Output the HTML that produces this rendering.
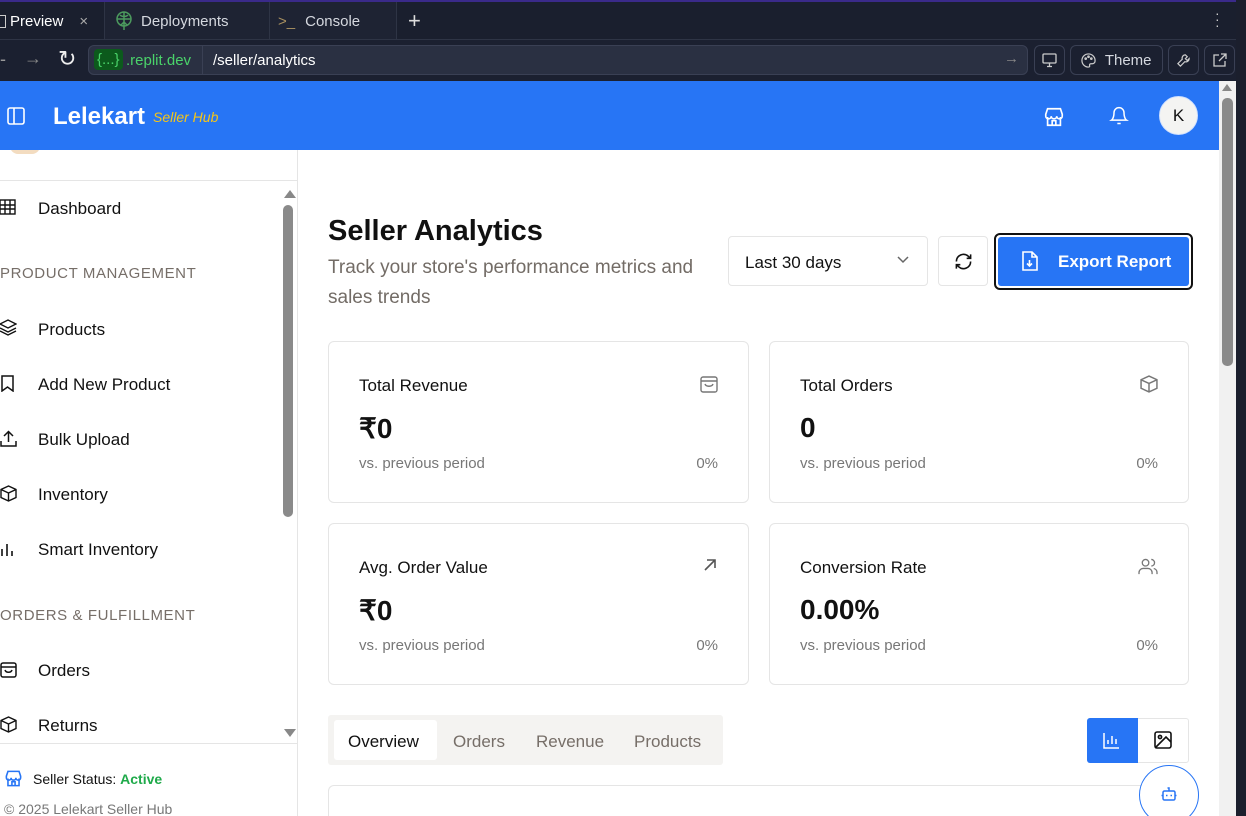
<!DOCTYPE html>
<html><head><meta charset="utf-8"><style>
*{box-sizing:border-box;margin:0;padding:0}
html,body{width:1246px;height:816px;overflow:hidden}
body{background:#1b1f2d;font-family:"Liberation Sans",sans-serif;position:relative}
.abs{position:absolute}
.tabbar{left:0;top:0;width:1246px;height:39px;background:#1a1f2e;border-top:2px solid #3a2a8a;color:#d5d8df;font-size:15px}
.tab{top:0;height:38px;display:flex;align-items:center;border-right:1px solid #2e3445}
.urlrow{left:0;top:39px;width:1246px;height:42px;background:#1b2030;border-top:1px solid #2e3445}
.url{left:88px;top:5px;width:940px;height:30px;background:#2a3042;border:1px solid #3a4054;border-radius:6px;color:#fff;font-size:15px}
.btn{top:5px;height:30px;border:1px solid #3a4054;border-radius:6px;color:#d5d8df;font-size:15px;display:flex;align-items:center;justify-content:center}
.header{left:0;top:81px;width:1219px;height:69px;background:#2775f5}
.page{left:0;top:150px;width:1219px;height:666px;background:#fff}
.vscroll{left:1219px;top:81px;width:17px;height:735px;background:#f1f1f1}
.rb{left:1236px;top:0;width:10px;height:816px;background:#1b1f2d}
.side{left:0;top:150px;width:298px;height:666px;border-right:1px solid #e5e5e5;background:#fff;overflow:hidden}
.nav{left:38px;font-size:17px;color:#111}
.sec{left:0;font-size:15px;color:#766e68;letter-spacing:0.6px}
.card{border:1px solid #e5e5e5;border-radius:6px;background:#fff;width:421px;height:162px}
.card .t{position:absolute;left:30px;top:34px;font-size:17px;color:#111}
.card .v{position:absolute;left:30px;top:70px;font-size:28px;font-weight:bold;color:#111}
.card .s{position:absolute;left:30px;top:113px;font-size:15px;color:#777}
.card .p{position:absolute;right:30px;top:113px;font-size:15px;color:#777}
.card svg{position:absolute;right:30px;top:33px}
</style></head><body>
<div class="abs tabbar">
 <div class="abs tab" style="left:0;width:105px;background:#1a1f2e"><span style="margin-left:-2px;border:1.5px solid #ccc;width:8px;height:13px;display:inline-block;border-left:none"></span><span style="margin-left:4px;color:#fff">Preview</span><span style="margin-left:16px;color:#aaa">×</span></div>
 <div class="abs tab" style="left:105px;width:165px;background:#1e2333"><svg style="margin-left:10px" width="18" height="20" viewBox="0 0 18 20" fill="none" stroke="#4c9a5e" stroke-width="1.5"><circle cx="9" cy="8" r="7"/><path d="M2 8h14M9 1v18M5 4c2 2 6 2 8 0M6 14l3-3 3 3"/></svg><span style="margin-left:8px">Deployments</span></div>
 <div class="abs tab" style="left:270px;width:127px;background:#1e2333"><span style="margin-left:8px;color:#a89060">&gt;_</span><span style="margin-left:10px">Console</span></div>
 <div class="abs" style="left:408px;top:6px;font-size:22px;color:#ddd">+</div>
 <div class="abs" style="left:1215px;top:8px;color:#ccc;font-size:14px;line-height:6px">·<br>·<br>·</div>
</div>
<div class="abs urlrow">
 <div class="abs" style="left:0;top:9px;color:#999;font-size:18px">-</div>
 <div class="abs" style="left:24px;top:8px;color:#888;font-size:18px">→</div>
 <div class="abs" style="left:58px;top:6px;color:#eee;font-size:22px">↻</div>
 <div class="abs url"><span class="abs" style="left:5px;top:3px;background:#0c5a1c;color:#4ad36a;border-radius:4px;padding:2px 3px;font-size:15px">{...}</span><span class="abs" style="left:37px;top:6px;color:#4ad36a">.replit.dev</span><span class="abs" style="left:113px;top:0;width:1px;height:28px;background:#3a4054"></span><span class="abs" style="left:124px;top:6px">/seller/analytics</span><span class="abs" style="right:8px;top:4px;color:#888">→</span></div>
 <div class="abs btn" style="left:1034px;width:31px"><svg width="15" height="15" viewBox="0 0 15 15" fill="none" stroke="#ccc" stroke-width="1.3"><rect x="1" y="1" width="13" height="9" rx="1"/><path d="M7.5 10v3M5 13.5h5"/></svg></div>
 <div class="abs btn" style="left:1070px;width:93px"><svg width="15" height="15" viewBox="0 0 16 16" fill="none" stroke="#ccc" stroke-width="1.3"><path d="M8 1a7 7 0 0 0 0 14c1 0 1.5-.7 1.2-1.5-.4-1 .2-2 1.3-2H12a3 3 0 0 0 3-3A7 7 0 0 0 8 1z"/><circle cx="5" cy="6" r=".8"/><circle cx="8" cy="4" r=".8"/><circle cx="11" cy="6" r=".8"/></svg>&nbsp;&nbsp;Theme</div>
 <div class="abs btn" style="left:1168px;width:31px"><svg width="15" height="15" viewBox="0 0 16 16" fill="none" stroke="#ccc" stroke-width="1.3"><path d="M10 2a3.5 3.5 0 0 0-3.3 4.6L2 11.3 4.7 14l4.7-4.7A3.5 3.5 0 0 0 14 6l-2 2-2-2 2-2z"/></svg></div>
 <div class="abs btn" style="left:1204px;width:31px"><svg width="14" height="14" viewBox="0 0 14 14" fill="none" stroke="#ccc" stroke-width="1.3"><path d="M12 8v5H1V2h5M8 1h5v5M13 1L6 8"/></svg></div>
</div>
<div class="abs header">
 <svg class="abs" style="left:7px;top:26px" width="18" height="18" viewBox="0 0 18 18" fill="none" stroke="#fff" stroke-width="1.6"><rect x="1" y="1" width="16" height="16" rx="2"/><path d="M7 1v16"/></svg>
 <div class="abs" style="left:53px;top:22px;color:#fff;font-size:24px;font-weight:bold">Lelekart</div>
 <div class="abs" style="left:153px;top:28px;color:#f5c518;font-size:14px;font-style:italic">Seller Hub</div>
 <svg class="abs" style="left:1043px;top:25px" width="22" height="22" viewBox="0 0 24 24" fill="none" stroke="#fff" stroke-width="1.8"><path d="M3 9l2-6h14l2 6v2a3 3 0 0 1-6 0 3 3 0 0 1-6 0 3 3 0 0 1-6 0z"/><path d="M5 12v9h14v-9M10 21v-5h4v5"/></svg>
 <svg class="abs" style="left:1109px;top:24px" width="20" height="22" viewBox="0 0 24 24" fill="none" stroke="#fff" stroke-width="1.8"><path d="M6 8a6 6 0 0 1 12 0c0 7 3 9 3 9H3s3-2 3-9M10 21h4"/></svg>
 <div class="abs" style="left:1159px;top:15px;width:39px;height:39px;border-radius:50%;background:#f4f4f2;border:1px solid #cfe0ff;text-align:center;line-height:38px;font-size:17px;color:#111">K</div>
</div>
<div class="abs page"></div>
<div class="abs side">
 <div class="abs" style="left:0;top:0;width:297px;height:31px;border-bottom:1px solid #e5e5e5"><div class="abs" style="left:10px;top:-4px;width:30px;height:8px;border-radius:0 0 15px 15px;background:#f3dcc0"></div></div>
 <div class="abs" style="left:284px;top:40px;width:0;height:0;border-left:6px solid transparent;border-right:6px solid transparent;border-bottom:8px solid #888"></div>
 <div class="abs" style="left:283px;top:55px;width:10px;height:312px;background:#8a8a8a;border-radius:5px"></div>
 <div class="abs" style="left:284px;top:579px;width:0;height:0;border-left:6px solid transparent;border-right:6px solid transparent;border-top:8px solid #888"></div>
 <svg class="abs" style="left:0;top:49px" width="16" height="16" viewBox="0 0 16 16" fill="none" stroke="#111" stroke-width="1.4"><rect x="0" y="1" width="15" height="14"/><path d="M0 6h15M0 10h15M5 1v14M10 1v14"/></svg>
 <div class="abs nav" style="top:49px">Dashboard</div>
 <div class="abs sec" style="top:115px">PRODUCT MANAGEMENT</div>
 <svg class="abs" style="left:0;top:169px" width="17" height="17" viewBox="0 0 17 17" fill="none" stroke="#111" stroke-width="1.4"><path d="M0 5l8-4 8 4-8 4zM0 9l8 4 8-4M0 12l8 4 8-4"/></svg>
 <div class="abs nav" style="top:170px">Products</div>
 <svg class="abs" style="left:0;top:225px" width="15" height="17" viewBox="0 0 15 17" fill="none" stroke="#111" stroke-width="1.5"><path d="M2 1h11v15l-5.5-4L2 16z"/></svg>
 <div class="abs nav" style="top:225px">Add New Product</div>
 <svg class="abs" style="left:0;top:280px" width="17" height="17" viewBox="0 0 17 17" fill="none" stroke="#111" stroke-width="1.5"><path d="M1 11v5h15v-5M8.5 12V2M4 6l4.5-4.5L13 6"/></svg>
 <div class="abs nav" style="top:280px">Bulk Upload</div>
 <svg class="abs" style="left:0;top:335px" width="17" height="17" viewBox="0 0 17 17" fill="none" stroke="#111" stroke-width="1.4"><path d="M8.5 1L16 4.5v8L8.5 16 1 12.5v-8zM1 4.5l7.5 3.5 7.5-3.5M8.5 8v8"/></svg>
 <div class="abs nav" style="top:335px">Inventory</div>
 <svg class="abs" style="left:0;top:391px" width="16" height="16" viewBox="0 0 16 16" fill="none" stroke="#111" stroke-width="1.6"><path d="M2 15V8M7 15V3M12 15V10"/></svg>
 <div class="abs nav" style="top:390px">Smart Inventory</div>
 <div class="abs sec" style="top:457px">ORDERS &amp; FULFILLMENT</div>
 <svg class="abs" style="left:0;top:511px" width="17" height="17" viewBox="0 0 17 17" fill="none" stroke="#111" stroke-width="1.5"><rect x="1" y="2" width="15" height="14" rx="2"/><path d="M1 6h15M5 9c1 3 6 3 7 0"/></svg>
 <div class="abs nav" style="top:511px">Orders</div>
 <svg class="abs" style="left:0;top:566px" width="17" height="17" viewBox="0 0 17 17" fill="none" stroke="#111" stroke-width="1.4"><path d="M8.5 1L16 4.5v8L8.5 16 1 12.5v-8zM1 4.5l7.5 3.5 7.5-3.5M8.5 8v8"/></svg>
 <div class="abs nav" style="top:566px">Returns</div>
 <div class="abs" style="left:0;top:593px;width:297px;height:1px;background:#e5e5e5"></div>
 <svg class="abs" style="left:4px;top:619px" width="19" height="19" viewBox="0 0 24 24" fill="none" stroke="#2775f5" stroke-width="2"><path d="M3 9l2-6h14l2 6v2a3 3 0 0 1-6 0 3 3 0 0 1-6 0 3 3 0 0 1-6 0z"/><path d="M5 12v9h14v-9M10 21v-5h4v5"/></svg>
 <div class="abs" style="left:33px;top:621px;font-size:14px;color:#111">Seller Status: <span style="color:#1faa4a;font-weight:bold">Active</span></div>
 <div class="abs" style="left:4px;top:651px;font-size:14px;color:#777">© 2025 Lelekart Seller Hub</div>
</div>
<div class="abs vscroll"><div class="abs" style="left:3px;top:3px;border-left:5px solid transparent;border-right:5px solid transparent;border-bottom:7px solid #888"></div><div class="abs" style="left:3px;top:17px;width:11px;height:268px;background:#8a8a8a;border-radius:5px"></div></div>
<div class="abs rb"></div>

<div class="abs" style="left:328px;top:215px;font-size:29px;font-weight:bold;color:#111">Seller Analytics</div>
<div class="abs" style="left:328px;top:253px;width:400px;font-size:19px;line-height:30px;color:#736c66">Track your store's performance metrics and sales trends</div>
<div class="abs" style="left:728px;top:236px;width:200px;height:50px;border:1px solid #e5e5e5;border-radius:4px;font-size:17px;color:#111;padding:16px 0 0 16px">Last 30 days<svg class="abs" style="right:18px;top:19px" width="12" height="8" viewBox="0 0 12 8" fill="none" stroke="#666" stroke-width="1.5"><path d="M1 1l5 5 5-5"/></svg></div>
<div class="abs" style="left:938px;top:236px;width:50px;height:50px;border:1px solid #e5e5e5;border-radius:4px"><svg class="abs" style="left:15px;top:15px" width="19" height="19" viewBox="0 0 24 24" fill="none" stroke="#111" stroke-width="2"><path d="M3 12a9 9 0 0 1 15-6.7L21 8M21 3v5h-5M21 12a9 9 0 0 1-15 6.7L3 16M3 21v-5h5"/></svg></div>
<div class="abs" style="left:994px;top:233px;width:199px;height:57px;border:2.5px solid #111;border-radius:6px;padding:2px"><div style="width:100%;height:100%;background:#2775f5;border-radius:3px;position:relative"><svg class="abs" style="left:23px;top:14px" width="17" height="20" viewBox="0 0 17 20" fill="none" stroke="#fff" stroke-width="1.6"><path d="M2 1h9l5 5v13H2zM11 1v5h5M8.5 9v6M6 12.5l2.5 2.5 2.5-2.5"/></svg><span class="abs" style="left:60px;top:15px;color:#fff;font-size:17px;font-weight:bold">Export Report</span></div></div>

<div class="abs card" style="left:328px;top:341px"><div class="t">Total Revenue</div><svg width="18" height="18" viewBox="0 0 18 18" fill="none" stroke="#777" stroke-width="1.4"><rect x="1" y="2" width="16" height="15" rx="2"/><path d="M1 6h16M5 9c1 3 7 3 8 0"/></svg><div class="v">₹0</div><div class="s">vs. previous period</div><div class="p">0%</div></div>
<div class="abs card" style="left:769px;top:341px;width:420px"><div class="t">Total Orders</div><svg width="18" height="18" viewBox="0 0 17 17" fill="none" stroke="#777" stroke-width="1.4"><path d="M8.5 1L16 4.5v8L8.5 16 1 12.5v-8zM1 4.5l7.5 3.5 7.5-3.5M8.5 8v8"/></svg><div class="v">0</div><div class="s">vs. previous period</div><div class="p">0%</div></div>
<div class="abs card" style="left:328px;top:523px"><div class="t">Avg. Order Value</div><svg width="16" height="16" viewBox="0 0 16 16" fill="none" stroke="#555" stroke-width="1.6"><path d="M3 13L13 3M5 3h8v8"/></svg><div class="v">₹0</div><div class="s">vs. previous period</div><div class="p">0%</div></div>
<div class="abs card" style="left:769px;top:523px;width:420px"><div class="t">Conversion Rate</div><svg width="20" height="18" viewBox="0 0 24 22" fill="none" stroke="#777" stroke-width="1.6"><circle cx="9" cy="7" r="4"/><path d="M1 21v-2a5 5 0 0 1 5-5h6a5 5 0 0 1 5 5v2M16 3a4 4 0 0 1 0 8M23 21v-2a5 5 0 0 0-4-5"/></svg><div class="v">0.00%</div><div class="s">vs. previous period</div><div class="p">0%</div></div>

<div class="abs" style="left:328px;top:715px;width:395px;height:50px;background:#f4f3f1;border-radius:3px"></div>
<div class="abs" style="left:334px;top:720px;width:103px;height:40px;background:#fff;border-radius:3px"></div>
<div class="abs" style="left:348px;top:732px;font-size:17px;color:#111">Overview</div>
<div class="abs" style="left:453px;top:732px;font-size:17px;color:#766e68">Orders</div>
<div class="abs" style="left:536px;top:732px;font-size:17px;color:#766e68">Revenue</div>
<div class="abs" style="left:634px;top:732px;font-size:17px;color:#766e68">Products</div>
<div class="abs" style="left:1087px;top:718px;width:102px;height:45px;border:1px solid #e5e5e5;border-radius:3px"></div>
<div class="abs" style="left:1087px;top:718px;width:51px;height:45px;background:#2775f5;border-radius:3px 0 0 3px"><svg class="abs" style="left:16px;top:14px" width="17" height="17" viewBox="0 0 17 17" fill="none" stroke="#fff" stroke-width="1.5"><path d="M1 1v15h15M5 12V8M9 12V4M13 12V7"/></svg></div>
<svg class="abs" style="left:1154px;top:731px" width="18" height="18" viewBox="0 0 18 18" fill="none" stroke="#111" stroke-width="1.6"><rect x="1" y="1" width="16" height="16" rx="2"/><circle cx="6" cy="6" r="1.6"/><path d="M17 11l-5-5L1 17"/></svg>
<div class="abs" style="left:328px;top:785px;width:861px;height:31px;border:1px solid #e5e5e5;border-bottom:none;border-radius:6px 6px 0 0"></div>
<div class="abs" style="left:1139px;top:765px;width:60px;height:51px;overflow:hidden"><div class="abs" style="left:0;top:0;width:60px;height:60px;border-radius:50%;border:1.5px solid #2775f5;background:#fff"><svg class="abs" style="left:20px;top:19px" width="18" height="18" viewBox="0 0 24 24" fill="none" stroke="#2775f5" stroke-width="2"><rect x="4" y="8" width="16" height="12" rx="2"/><path d="M12 8V4h-2M2 14h2M20 14h2M9 13v2M15 13v2"/></svg></div></div>
</body></html>
